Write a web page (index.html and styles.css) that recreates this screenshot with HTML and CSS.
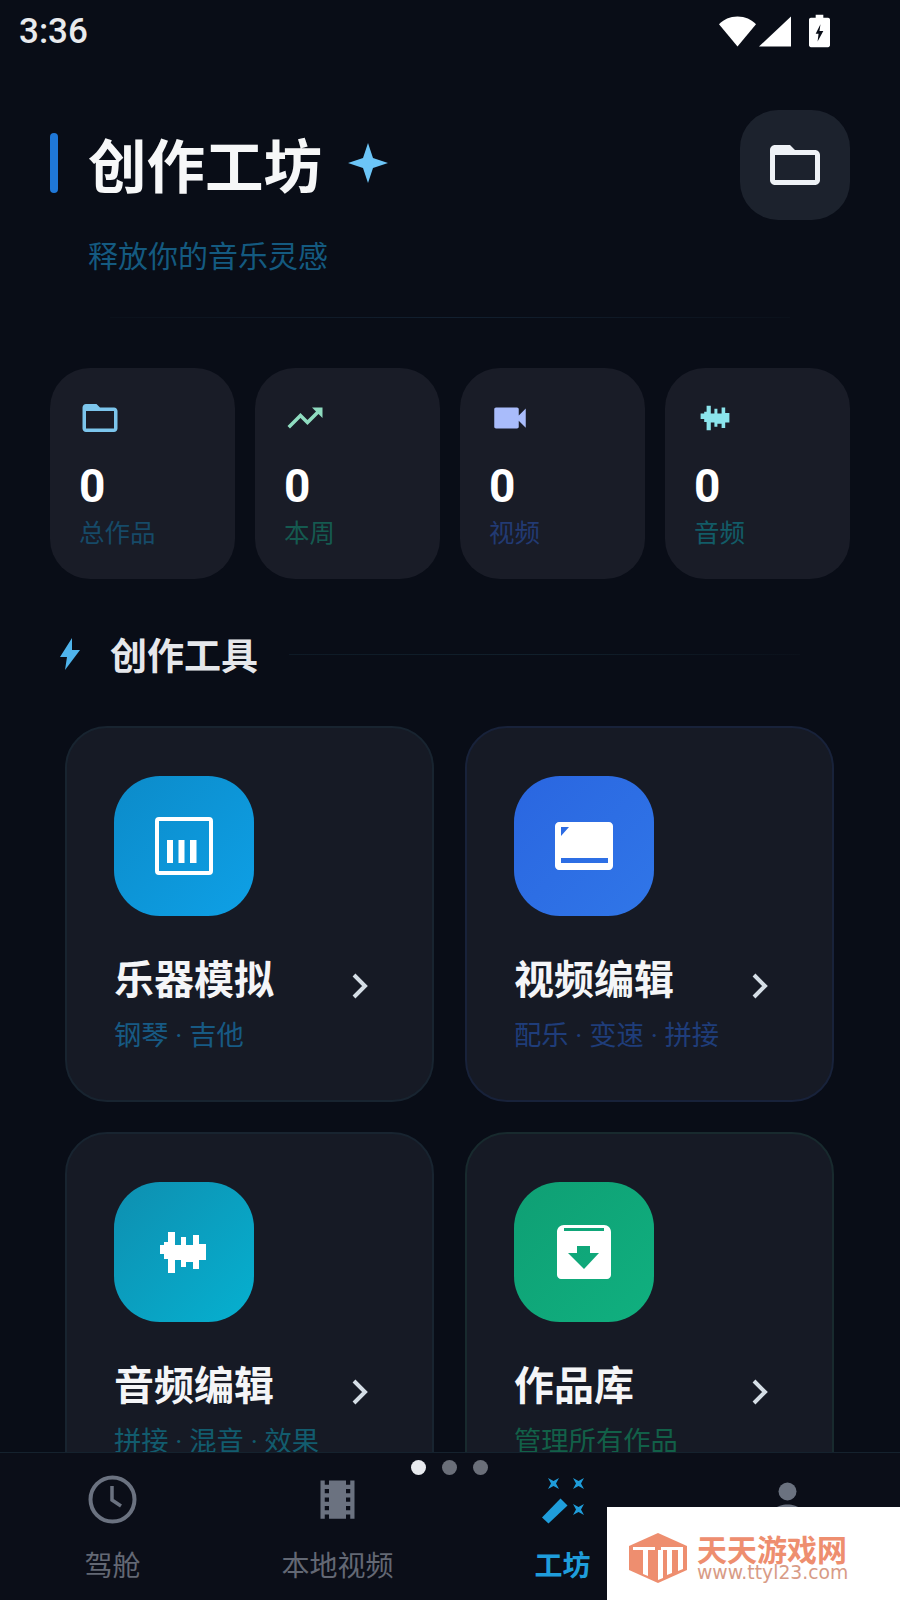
FILE: index.html
```html
<!DOCTYPE html>
<html lang="zh-CN">
<head>
<meta charset="UTF-8">
<meta name="viewport" content="width=device-width, initial-scale=1.0">
<title>创作工坊</title>
<link rel="stylesheet" href="styles.css">
</head>
<body>

<svg class="defs" width="0" height="0">
    <defs>
        <path id="ic-folder" d="M20 6h-8l-2-2H4c-1.1 0-1.99.9-1.99 2L2 18c0 1.1.9 2 2 2h16c1.1 0 2-.9 2-2V8c0-1.1-.9-2-2-2zm0 12H4V8h16v10z"/>
        <path id="ic-wave" d="M0 13h6v-3h4V0h7v13h6V5h5v8h7V3h6v9h7v16h-7v9h-6v-7h-7v5h-5v-7h-6v13h-7V27H6v-5H0z"/>
        <path id="ic-spark" d="M-5.500-5.500L0-2.500 5.500-5.500 2.500 0 5.500 5.500 0 2.500-5.500 5.500-2.500 0z"/>
    </defs>
</svg>

<main class="screen">
    <div class="status">
        <span class="time">3:36</span>
        <div class="status-icons">
            <svg width="37" height="32" viewBox="0 0 38 32"><path d="M19 32L0 9C5 4 11 1 19 1s14 3 19 8z"/></svg>
            <svg width="32" height="32" viewBox="0 0 33 32"><path d="M33 1v31H0z"/></svg>
            <svg class="batt" width="21" height="34" viewBox="0 0 22 34"><path fill-rule="evenodd" d="M7 0h8v3h5c1 0 2 1 2 2v27c0 1-1 2-2 2H2c-1 0-2-1-2-2V5c0-1 1-2 2-2h5zM12 10l-5 10h3l-1 8 6-11h-4z"/></svg>
        </div>
    </div>

    <header class="top">
        <div class="top-left">
            <div class="title-row">
                <span class="accent"></span>
                <h1>创作工坊</h1>
                <svg class="star" width="40" height="40" viewBox="0 0 40 40"><path d="M20 0L25 15 40 20 25 25 20 40 15 25 0 20 15 15z"/></svg>
            </div>
            <p class="tagline">释放你的音乐灵感</p>
        </div>
        <div class="folder-btn">
            <svg width="60" height="60" viewBox="0 0 24 24"><use href="#ic-folder"/></svg>
        </div>
    </header>

    <div class="rule"></div>

    <section class="stats">
        <div class="stat">
            <svg class="stat-icon c-sky" viewBox="0 0 24 24"><use href="#ic-folder"/></svg>
            <div class="num">0</div>
            <div class="stat-label l-sky">总作品</div>
        </div>
        <div class="stat">
            <svg class="stat-icon c-mint" viewBox="0 0 24 24"><path d="M16 6l2.290 2.290-4.880 4.880-4-4L2 16.590 3.410 18l6-6 4 4 6.300-6.290L22 12V6z"/></svg>
            <div class="num">0</div>
            <div class="stat-label l-mint">本周</div>
        </div>
        <div class="stat">
            <svg class="stat-icon c-indigo" viewBox="0 0 24 24"><path d="M17 10.500V7c0-.55-.45-1-1-1H4c-.55 0-1 .45-1 1v10c0 .55.45 1 1 1h12c.55 0 1-.45 1-1v-3.500l4 4v-11l-4 4z"/></svg>
            <div class="num">0</div>
            <div class="stat-label l-indigo">视频</div>
        </div>
        <div class="stat">
            <svg class="stat-icon c-cyan" viewBox="-11 -10 70 61"><use href="#ic-wave"/></svg>
            <div class="num">0</div>
            <div class="stat-label l-cyan">音频</div>
        </div>
    </section>

    <div class="section-head">
        <svg width="20" height="32" viewBox="0 0 20 32"><path d="M12 0L0 19h7L5 32l15-20h-8z"/></svg>
        <h2>创作工具</h2>
        <span class="section-line"></span>
    </div>

    <section class="tools">
        <div class="tool tool-sky">
            <div class="tool-icon">
                <svg width="58" height="58" viewBox="0 0 58 58"><rect x="2" y="2" width="54" height="54" rx="2" fill="none" stroke="#fff" stroke-width="4"/><path d="M12 23h6v23h-6zM23.500 23h6v23h-6zM35 23h6.500v23H35z" fill="#fff"/></svg>
            </div>
            <div class="tool-row">
                <h3>乐器模拟</h3>
                <svg class="chev" width="18" height="26" viewBox="0 0 18 26"><path d="M3 2l11 11L3 24"/></svg>
            </div>
            <p class="tool-sub">钢琴 · 吉他</p>
        </div>
        <div class="tool tool-blue">
            <div class="tool-icon">
                <svg width="58" height="48" viewBox="0 0 58 48"><path fill-rule="evenodd" fill="#fff" d="M4 0h50c2 0 4 2 4 4v40c0 2-2 4-4 4H4c-2 0-4-2-4-4V4c0-2 2-4 4-4zM6 36v5h47v-5zM6 5v9l8-9z"/></svg>
            </div>
            <div class="tool-row">
                <h3>视频编辑</h3>
                <svg class="chev" width="18" height="26" viewBox="0 0 18 26"><path d="M3 2l11 11L3 24"/></svg>
            </div>
            <p class="tool-sub">配乐 · 变速 · 拼接</p>
        </div>
        <div class="tool tool-cyan">
            <div class="tool-icon">
                <svg width="48" height="41" viewBox="2 0 48 41"><use href="#ic-wave" fill="#fff"/></svg>
            </div>
            <div class="tool-row">
                <h3>音频编辑</h3>
                <svg class="chev" width="18" height="26" viewBox="0 0 18 26"><path d="M3 2l11 11L3 24"/></svg>
            </div>
            <p class="tool-sub">拼接 · 混音 · 效果</p>
        </div>
        <div class="tool tool-green">
            <div class="tool-icon">
                <svg width="54" height="54" viewBox="0 0 54 54"><path fill-rule="evenodd" fill="#fff" d="M7 0h40c4 0 7 3 7 7v43c0 2-2 4-4 4H4c-2 0-4-2-4-4V7c0-4 3-7 7-7zM7 3v3h40V3zM20 21v7h-9l16 16 15-16h-9v-7z"/></svg>
            </div>
            <div class="tool-row">
                <h3>作品库</h3>
                <svg class="chev" width="18" height="26" viewBox="0 0 18 26"><path d="M3 2l11 11L3 24"/></svg>
            </div>
            <p class="tool-sub">管理所有作品</p>
        </div>
    </section>
</main>

<nav class="tabs">
    <div class="dots"><i class="on"></i><i></i><i></i></div>
    <div class="tab">
        <svg width="51" height="51" viewBox="0 0 51 51"><circle cx="25.500" cy="25.500" r="22" fill="none" stroke="#6b7280" stroke-width="4"/><path d="M25 12v14l9 6" fill="none" stroke="#6b7280" stroke-width="3.500"/></svg>
        <span>驾舱</span>
    </div>
    <div class="tab">
        <svg width="51" height="51" viewBox="0 0 24 24"><path fill="#6b7280" d="M18 3v2h-2V3H8v2H6V3H4v18h2v-2h2v2h8v-2h2v2h2V3h-2zM8 17H6v-2h2v2zm0-4H6v-2h2v2zm0-4H6V7h2v2zm10 8h-2v-2h2v2zm0-4h-2v-2h2v2zm0-4h-2V7h2v2z"/></svg>
        <span>本地视频</span>
    </div>
    <div class="tab tab-on">
        <svg width="51" height="51" viewBox="0 0 51 51" fill="#1f9ddb">
            <use href="#ic-spark" x="16.500" y="9.500"/>
            <use href="#ic-spark" x="41.500" y="9.500"/>
            <use href="#ic-spark" x="41.500" y="35.500"/>
            <path d="M5 43.500L23.500 24.500l7 7L11.500 49.500z"/>
        </svg>
        <span>工坊</span>
    </div>
    <div class="tab">
        <svg width="51" height="51" viewBox="0 0 51 51" fill="#6b7280"><circle cx="25.500" cy="17.500" r="9"/><path d="M5 51c0-14 10-20.500 20.500-20.500S46 37 46 51z"/></svg>
    </div>
</nav>

<div class="watermark">
    <svg width="58" height="50" viewBox="0 0 58 50">
        <path fill="#ee8e6f" d="M29 0l29 13v24L29 50 0 37V13z"/>
        <path fill="#fff" d="M4 14h22v3H19v26l-5-2V17H4zM29 17h5v28l-5 2zM32 14h22v22l-5 2V17H32zM38 17h5v23l-5 2z"/>
    </svg>
    <div class="wm-text">
        <div class="wm-name">天天游戏网</div>
        <div class="wm-url">www.ttyl23.com</div>
    </div>
</div>

</body>
</html>
```

FILE: styles.css
```css
* {
    box-sizing: border-box;
}

html, body {
    margin: 0;
    padding: 0;
}

body {
    position: relative;
    width: 900px;
    height: 1600px;
    overflow: hidden;
    display: flex;
    flex-direction: column;
    background: #090d17;
    color: #fff;
    font-family: "Noto Sans CJK SC", "Noto Sans", sans-serif;
}

h1, h2, h3, p {
    margin: 0;
}

.defs {
    position: absolute;
}

.screen {
    height: 1452px;
    flex: none;
    overflow: hidden;
}

/* status bar */
.status {
    height: 62px;
    padding: 0 70px 0 19px;
    display: flex;
    justify-content: space-between;
    align-items: center;
}

.time {
    font-family: Roboto, sans-serif;
    font-size: 35px;
    font-weight: 500;
    color: #e8eaed;
}

.status-icons {
    display: flex;
    align-items: center;
    gap: 3px;
    fill: #fff;
}

.batt {
    margin-left: 15px;
}

/* header */
.top {
    margin-top: 48px;
    padding: 0 50px;
    display: flex;
    justify-content: space-between;
    align-items: flex-start;
}

.top-left {
    padding-top: 23px;
}

.title-row {
    display: flex;
    align-items: center;
    height: 60px;
}

.accent {
    width: 8px;
    height: 60px;
    border-radius: 4px;
    background: #1f78d8;
}

h1 {
    margin-left: 30px;
    font-size: 58.500px;
    line-height: 60px;
    font-weight: 700;
    color: #f6f7f8;
}

.star {
    margin-left: 26px;
    fill: #6cc5f7;
}

.tagline {
    margin-top: 41px;
    padding-left: 38px;
    font-size: 30px;
    line-height: 40px;
    color: #145a80;
}

.folder-btn {
    width: 110px;
    height: 110px;
    border-radius: 38px;
    background: #1c222d;
    display: flex;
    align-items: center;
    justify-content: center;
    fill: #eef2f6;
}

.rule {
    width: 680px;
    height: 1px;
    margin: 43px auto 0;
    background: linear-gradient(90deg, #0b111b, #122030 50%, #0b111b);
}

/* stats */
.stats {
    margin-top: 50px;
    padding: 0 50px;
    display: grid;
    grid-template-columns: repeat(4, 1fr);
    gap: 20px;
}

.stat {
    height: 211px;
    padding: 29px 0 0 29px;
    border-radius: 40px;
    background: #191c27;
}

.stat-icon {
    display: block;
    width: 42px;
    height: 42px;
}

.num {
    margin-top: 22px;
    font-family: Roboto, sans-serif;
    font-size: 46px;
    line-height: 50px;
    font-weight: 700;
}

.stat-label {
    margin-top: 4px;
    font-size: 25.500px;
    line-height: 32px;
}

.c-sky { fill: #7cc5ec; }
.c-mint { fill: #8fdcc0; }
.c-indigo { fill: #a9bcfb; }
.c-cyan { fill: #8be4ec; }
.l-sky { color: #164a68; }
.l-mint { color: #155a50; }
.l-indigo { color: #223a73; }
.l-cyan { color: #125c68; }

/* section title */
.section-head {
    margin-top: 55px;
    height: 40px;
    padding: 0 100px 0 60px;
    display: flex;
    align-items: center;
    fill: #4fb4ec;
}

h2 {
    margin-left: 30px;
    font-size: 37px;
    line-height: 40px;
    font-weight: 700;
    color: #e5e7eb;
}

.section-line {
    flex: 1;
    height: 1px;
    margin-left: 31px;
    background: linear-gradient(90deg, #0e1a26, #11202c 50%, #0b111b);
}

/* tool cards */
.tools {
    margin-top: 52px;
    padding: 0 66px 0 65px;
    display: grid;
    grid-template-columns: 1fr 1fr;
    gap: 30px 31px;
}

.tool {
    height: 376px;
    padding: 48px 0 0 47px;
    border: 2px solid #182430;
    border-radius: 42px;
    background: #161a25;
}

.tool-icon {
    width: 140px;
    height: 140px;
    border-radius: 46px;
    display: flex;
    align-items: center;
    justify-content: center;
}

.tool-row {
    margin-top: 36px;
    padding-right: 63px;
    display: flex;
    justify-content: space-between;
    align-items: center;
}

h3 {
    font-size: 40px;
    line-height: 50px;
    font-weight: 700;
    color: #f4f5f7;
}

.chev {
    margin-top: 17px;
    fill: none;
    stroke: #d5dee6;
    stroke-width: 4;
}

.tool-sub {
    margin-top: 16px;
    font-family: Roboto, "Noto Sans CJK SC", sans-serif;
    font-size: 27.300px;
    line-height: 36px;
    white-space: nowrap;
}

.tool-sky .tool-icon { background: linear-gradient(135deg, #0c8bc9, #0ea0e6); }
.tool-sky .tool-sub { color: #175a84; }
.tool-blue { border-color: #18223a; }
.tool-blue .tool-icon { background: linear-gradient(135deg, #2a66e0, #3076e8); }
.tool-blue .tool-sub { color: #1f3d7a; }
.tool-cyan .tool-icon { background: linear-gradient(135deg, #0e8fb0, #06b0d0); }
.tool-cyan .tool-sub { color: #125c6e; }
.tool-green { border-color: #182a2e; }
.tool-green .tool-icon { background: linear-gradient(135deg, #0f9f74, #10b07f); }
.tool-green .tool-sub { color: #126048; }

/* bottom nav */
.tabs {
    position: relative;
    flex: 1;
    border-top: 1px solid #15222e;
    display: grid;
    grid-template-columns: repeat(4, 225px);
    background: #0b0e18;
}

.dots {
    position: absolute;
    left: 411px;
    top: 7px;
    display: flex;
    gap: 16px;
}

.dots i {
    width: 15px;
    height: 15px;
    border-radius: 50%;
    background: #6b6f79;
}

.dots i.on {
    background: #e8eaee;
}

.tab {
    padding-top: 21px;
    display: flex;
    flex-direction: column;
    align-items: center;
    color: #636874;
}

.tab span {
    margin-top: 21px;
    font-size: 28px;
    line-height: 36px;
}

.tab-on {
    color: #1f9ddb;
}

.tab-on span {
    font-weight: 700;
}

/* image watermark over the corner */
.watermark {
    position: absolute;
    right: 0;
    bottom: 0;
    width: 293px;
    height: 93px;
    padding: 26px 0 0 22px;
    background: #fff;
    display: flex;
    gap: 10px;
    align-items: flex-start;
}

.wm-name {
    font-size: 30px;
    line-height: 30px;
    font-weight: 700;
    color: #ee8e6f;
}

.wm-url {
    margin-top: -1px;
    font-family: "DejaVu Sans", sans-serif;
    font-size: 18.800px;
    line-height: 22px;
    color: #d89b86;
}
```
